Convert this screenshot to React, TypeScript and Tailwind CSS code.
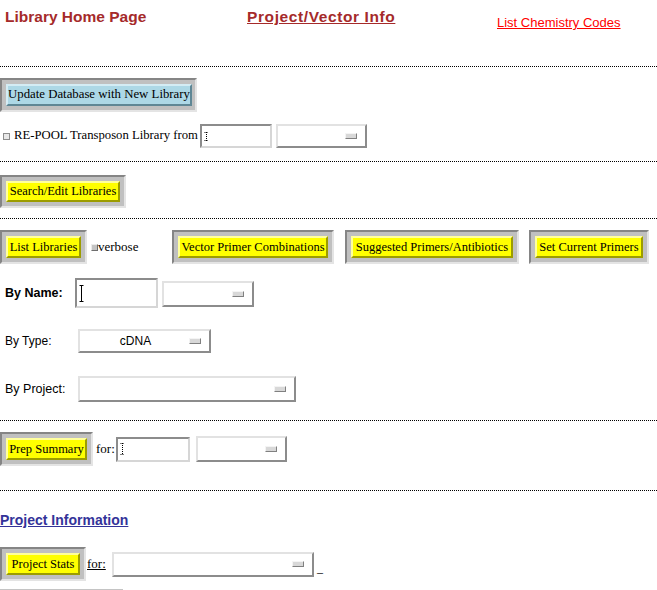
import React from "react";

const serif = "font-['Liberation_Serif',serif]";
const sans = "font-['Liberation_Sans',Arial,sans-serif]";

// raised / sunken bevels in the old Motif look
const raised =
  "border-2 border-t-[#e2e2e2] border-l-[#e2e2e2] border-b-[#8c8c8c] border-r-[#8c8c8c]";
const sunken =
  "border-2 border-t-[#8c8c8c] border-l-[#8c8c8c] border-b-[#d6d6d6] border-r-[#d6d6d6]";

function Rule() {
  return <div className="h-0 w-full border-t border-dotted border-black" />;
}

function FrameButton({
  label,
  frame,
  blue,
  textSize = "text-[12.5px]",
}: {
  label: string;
  frame: string;
  blue?: boolean;
  textSize?: string;
}) {
  return (
    <div
      className={`box-border flex shrink-0 border-2 border-t-[#858585] border-l-[#858585] border-b-[#e4e4e4] border-r-[#e4e4e4] bg-[#c0c0c0] p-[4px] ${frame}`}
    >
      <div
        className={`flex flex-1 items-center justify-center whitespace-nowrap border-2 text-black ${serif} ${textSize} ${
          blue
            ? "bg-[#add8e6] border-t-[#d4ecf4] border-l-[#d4ecf4] border-b-[#5f8795] border-r-[#5f8795]"
            : "bg-[#ffff00] border-t-[#ffff9c] border-l-[#ffff9c] border-b-[#9c9c00] border-r-[#9c9c00]"
        }`}
      >
        {label}
      </div>
    </div>
  );
}

function Select({ cls, value }: { cls: string; value?: string }) {
  return (
    <div
      className={`box-border flex shrink-0 items-center bg-white pr-[8px] ${raised} ${cls}`}
    >
      <span className={`flex-1 text-center text-[12px] text-black ${sans}`}>
        {value}
      </span>
      <span className="box-border h-[6px] w-[12px] border border-t-[#f4f4f4] border-l-[#f4f4f4] border-b-[#808080] border-r-[#808080] bg-[#d8d8d8]" />
    </div>
  );
}

function Cursor({ dotted, h }: { dotted?: boolean; h: number }) {
  return (
    <svg width="5" height={h} className="shrink-0">
      <g
        stroke="#000"
        strokeWidth="1"
        strokeDasharray={dotted ? "1 1" : undefined}
        fill="none"
      >
        <line x1="2.5" y1="0" x2="2.5" y2={h} />
        <line x1="0.5" y1="0.5" x2="4.5" y2="0.5" />
        <line x1="0.5" y1={h - 0.5} x2="4.5" y2={h - 0.5} />
      </g>
    </svg>
  );
}

function TextInput({
  cls,
  dotted,
  h,
}: {
  cls: string;
  dotted?: boolean;
  h: number;
}) {
  return (
    <div className={`box-border flex shrink-0 items-center bg-white pl-[2px] ${sunken} ${cls}`}>
      <Cursor dotted={dotted} h={h} />
    </div>
  );
}

function Check({ hollow }: { hollow?: boolean }) {
  return (
    <span
      className={`box-border inline-block h-[7px] w-[7px] shrink-0 border ${
        hollow
          ? "border-[#8c8c8c] bg-[#e8e8e8]"
          : "border-t-[#ececec] border-l-[#ececec] border-b-[#6e6e6e] border-r-[#6e6e6e] bg-[#c4c4c4]"
      }`}
    />
  );
}

export default function App() {
  return (
    <div className="h-[590px] w-[657px] overflow-hidden bg-white text-black">
      {/* header links */}
      <div className={`flex h-[66px] items-start pl-[5px] pt-[8px] ${sans}`}>
        <span className="w-[242px] text-[15.5px] font-bold leading-[18px] text-[#a52a2a]">
          Library Home Page
        </span>
        <a className="w-[250px] text-[15.5px] font-bold leading-[18px] tracking-[0.6px] text-[#a52a2a] underline">
          Project/Vector Info
        </a>
        <a className="mt-[7px] text-[13px] leading-[15px] text-[#ff0000] underline">
          List Chemistry Codes
        </a>
      </div>
      <Rule />

      {/* update database */}
      <div className="mt-[11px] flex">
        <FrameButton
          label="Update Database with New Library"
          frame="w-[197px] h-[34px]"
          textSize="text-[12.8px]"
          blue
        />
      </div>
      <div className="mt-[12px] flex h-[24px] items-center pl-[3px]">
        <Check hollow />
        <span className={`ml-[4px] w-[186px] whitespace-nowrap text-[12.7px] ${serif}`}>
          RE-POOL Transposon Library from
        </span>
        <TextInput cls="w-[72px] h-[24px]" dotted h={9} />
        <Select cls="ml-[4px] w-[91px] h-[24px]" />
      </div>
      <div className="mt-[13px]">
        <Rule />
      </div>

      {/* search / edit */}
      <div className="mt-[13px] flex">
        <FrameButton label="Search/Edit Libraries" frame="w-[126px] h-[33px]" />
      </div>
      <div className="mt-[10px]">
        <Rule />
      </div>

      {/* list libraries */}
      <div className="mt-[11px] flex h-[34px] items-start">
        <FrameButton label="List Libraries" frame="w-[87px] h-[34px]" />
        <div className="flex w-[85px] items-center pl-[4px] pt-[12px]">
          <Check />
          <span className={`text-[13px] leading-[10px] ${serif}`}>verbose</span>
        </div>
        <FrameButton label="Vector Primer Combinations" frame="w-[162px] h-[34px]" />
        <div className="w-[11px]" />
        <FrameButton label="Suggested Primers/Antibiotics" frame="w-[174px] h-[34px]" />
        <div className="w-[10px]" />
        <FrameButton label="Set Current Primers" frame="w-[120px] h-[34px]" />
      </div>

      <div className="mt-[14px] flex h-[30px] items-start">
        <span className={`w-[75px] self-center pl-[5px] text-[12.5px] font-bold ${sans}`}>
          By Name:
        </span>
        <TextInput cls="w-[83px] h-[30px]" h={17} />
        <Select cls="ml-[4px] mt-[3px] w-[92px] h-[26px]" />
      </div>

      <div className="mt-[21px] flex h-[24px] items-center">
        <span className={`w-[78px] pl-[5px] text-[12px] ${sans}`}>By Type:</span>
        <Select cls="w-[133px] h-[24px] pl-[2px]" value="cDNA" />
      </div>

      <div className="mt-[23px] flex h-[26px] items-center">
        <span className={`w-[78px] pl-[5px] text-[12.5px] ${sans}`}>By Project:</span>
        <Select cls="w-[218px] h-[26px]" />
      </div>

      <div className="mt-[18px]">
        <Rule />
      </div>

      {/* prep summary */}
      <div className="mt-[11px] flex h-[34px] items-center">
        <FrameButton label="Prep Summary" frame="w-[93px] h-[34px]" />
        <span className={`ml-[3px] w-[20px] text-[13px] ${serif}`}>for:</span>
        <TextInput cls="w-[74px] h-[25px]" dotted h={12} />
        <Select cls="ml-[6px] w-[91px] h-[26px]" />
      </div>
      <div className="mt-[24px]">
        <Rule />
      </div>

      {/* project information */}
      <div className={`mt-[21px] h-[17px] text-[14px] font-bold leading-[17px] text-[#333399] ${sans}`}>
        <a className="underline">Project Information</a>
      </div>

      <div className="mt-[18px] flex h-[34px] items-center">
        <FrameButton label="Project Stats" frame="w-[86px] h-[34px]" />
        <span className={`w-[26px] pl-[1px] text-[13px] underline ${serif}`}>for:</span>
        <Select cls="w-[202px] h-[25px]" />
        <span className={`ml-[3px] mt-[8px] text-[12px] ${serif}`}>_</span>
      </div>

      <div className="mt-[8px] h-[2px] w-[123px] bg-[#c4c4c4]" />
    </div>
  );
}
